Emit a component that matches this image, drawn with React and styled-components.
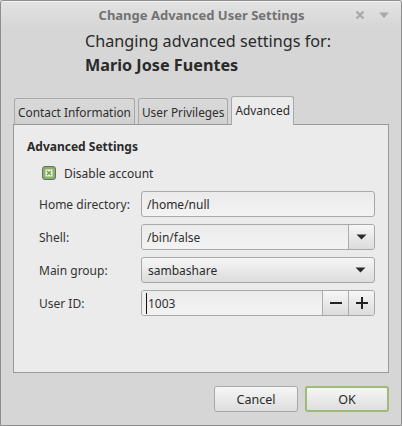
import React from "react";
import styled, { createGlobalStyle, css } from "styled-components";

const Global = createGlobalStyle`
  html, body { margin: 0; padding: 0; background: #d6d6d6; }
  body { font-family: "Noto Sans", "DejaVu Sans", sans-serif; font-size: 12px; color: #303030; }
  * { box-sizing: border-box; }
`;

const Window = styled.div`
  width: 402px;
  height: 426px;
  border: 1px solid #8e8e8e;
  border-radius: 3px 3px 0 0;
  background: #d6d6d6;
  display: flex;
  flex-direction: column;
  overflow: hidden;
`;

const TitleBar = styled.div`
  height: 27px;
  flex: none;
  display: grid;
  grid-template-columns: 1fr auto 1fr;
  align-items: center;
  background: linear-gradient(#e2e2e2, #d6d6d6);
  border-top: 1px solid #f4f4f4;
`;

const Title = styled.div`
  grid-column: 2;
  font-weight: bold;
  font-size: 13px;
  color: #727272;
  padding-left: 1px;
`;

const Controls = styled.div`
  justify-self: end;
  display: flex;
  align-items: center;
  gap: 14px;
  padding-right: 12px;
`;

const Header = styled.div`
  padding: 1px 0 0 84px;
  font-size: 16.2px;
  line-height: 24px;
  color: #2a2a2a;
`;

const Name = styled.div`
  font-weight: bold;
`;

const Notebook = styled.div`
  margin: 19px 12px 0 12px;
  display: flex;
  flex-direction: column;
`;

const TabStrip = styled.div`
  display: flex;
  align-items: flex-end;
  gap: 3px;
  padding-left: 1px;
  height: 28px;
  position: relative;
  z-index: 1;
`;

const Tab = styled.div`
  height: 26px;
  padding: 0 3px;
  border: 1px solid #a9a9a9;
  border-bottom: none;
  border-radius: 3px 3px 0 0;
  display: flex;
  align-items: center;
  font-size: 11.85px;
  background: linear-gradient(#dadada, #d0d0d0);
  color: #2e2e2e;
  ${(p) =>
    p.$active &&
    css`
      background: #ebebeb;
      margin-bottom: -1px;
      height: 29px;
      padding-bottom: 3px;
    `}
`;

const Panel = styled.div`
  height: 249px;
  border: 1px solid #999;
  background: #ebebeb;
  padding: 12px 13px 0 13px;
`;

const SectionTitle = styled.div`
  font-weight: bold;
  line-height: 20px;
  color: #2a2a2a;
`;

const CheckRow = styled.label`
  display: flex;
  align-items: center;
  gap: 8px;
  margin: 7px 0 0 15px;
  height: 18px;
  color: #2e2e2e;
`;

const Form = styled.div`
  display: grid;
  grid-template-columns: 102px 1fr;
  row-gap: 7px;
  align-items: center;
  margin: 9px 0 0 12px;
`;

const Label = styled.div`
  color: #333;
`;

const fieldBox = css`
  height: 26px;
  border: 1px solid #a8a8a8;
  border-radius: 3px;
`;

const Entry = styled.div`
  ${fieldBox};
  background: linear-gradient(#ebebeb, #f3f3f3);
  display: flex;
  align-items: center;
  padding-left: 5px;
  color: #2a2a2a;
`;

const Combo = styled.div`
  ${fieldBox};
  display: flex;
  overflow: hidden;
`;

const ComboText = styled.div`
  flex: 1;
  display: flex;
  align-items: center;
  padding-left: 5px;
  background: linear-gradient(#ebebeb, #f3f3f3);
`;

const SideButton = styled.div`
  width: 26px;
  display: flex;
  align-items: center;
  justify-content: center;
  border-left: 1px solid #ababab;
  background: linear-gradient(#f6f6f6, #dcdcdc);
`;

const ComboButton = styled.div`
  ${fieldBox};
  display: flex;
  align-items: center;
  justify-content: space-between;
  padding: 0 8px 0 6px;
  background: linear-gradient(#f6f6f6, #dcdcdc);
  color: #2a2a2a;
`;

const Caret = styled.span`
  width: 1px;
  height: 21px;
  background: #111;
  margin-right: 1px;
  margin-left: -1px;
`;

const Footer = styled.div`
  flex: 1;
  display: flex;
  justify-content: flex-end;
  align-items: flex-start;
  gap: 7px;
  padding: 13px 12px 0 0;
`;

const Button = styled.div`
  width: 84px;
  height: 26px;
  border: ${(p) => (p.$default ? "2px solid #9bbd78" : "1px solid #a8a8a8")};
  border-radius: 3px;
  background: linear-gradient(#f6f6f6, #dedede);
  display: flex;
  align-items: center;
  justify-content: center;
  color: #2a2a2a;
  font-size: 12.5px;
`;

const Arrow = () => (
  <svg width="11" height="6" viewBox="0 0 11 6">
    <path d="M0.5 0.5 L10.5 0.5 L5.5 5.5 Z" fill="#2a2a2a" />
  </svg>
);

const CheckIcon = () => (
  <svg width="14" height="14" viewBox="0 0 14 14">
    <rect x="0.5" y="0.5" width="13" height="13" rx="2.5" fill="#8ab268" stroke="#6b6b6b" />
    <rect x="3.5" y="3.5" width="7" height="7" fill="#eef4e6" />
    <path d="M5 5 L9 9 M9 5 L5 9" stroke="#6c9a45" strokeWidth="1.4" />
  </svg>
);

const Close = () => (
  <svg width="10" height="10" viewBox="0 0 10 10">
    <path d="M1.5 1.5 L8.5 8.5 M8.5 1.5 L1.5 8.5" stroke="#a8a8a8" strokeWidth="2.2" />
  </svg>
);

const Menu = () => (
  <svg width="10" height="7" viewBox="0 0 10 7">
    <path d="M0 0.5 L10 0.5 L5 6 Z" fill="#a8a8a8" />
  </svg>
);

const Minus = () => (
  <svg width="12" height="12" viewBox="0 0 12 12">
    <rect x="0" y="5" width="12" height="2" fill="#222" />
  </svg>
);

const Plus = () => (
  <svg width="12" height="12" viewBox="0 0 12 12">
    <rect x="0" y="5" width="12" height="2" fill="#222" />
    <rect x="5" y="0" width="2" height="12" fill="#222" />
  </svg>
);

export default function App() {
  return (
    <>
      <Global />
      <Window>
        <TitleBar>
          <Title>Change Advanced User Settings</Title>
          <Controls>
            <Close />
            <Menu />
          </Controls>
        </TitleBar>
        <Header>
          <div>Changing advanced settings for:</div>
          <Name>Mario Jose Fuentes</Name>
        </Header>
        <Notebook>
          <TabStrip>
            <Tab>Contact Information</Tab>
            <Tab>User Privileges</Tab>
            <Tab $active>Advanced</Tab>
          </TabStrip>
          <Panel>
            <SectionTitle>Advanced Settings</SectionTitle>
            <CheckRow>
              <CheckIcon />
              Disable account
            </CheckRow>
            <Form>
              <Label>Home directory:</Label>
              <Entry>/home/null</Entry>
              <Label>Shell:</Label>
              <Combo>
                <ComboText>/bin/false</ComboText>
                <SideButton>
                  <Arrow />
                </SideButton>
              </Combo>
              <Label>Main group:</Label>
              <ComboButton>
                sambashare
                <Arrow />
              </ComboButton>
              <Label>User ID:</Label>
              <Combo>
                <ComboText>
                  <Caret />
                  1003
                </ComboText>
                <SideButton>
                  <Minus />
                </SideButton>
                <SideButton>
                  <Plus />
                </SideButton>
              </Combo>
            </Form>
          </Panel>
        </Notebook>
        <Footer>
          <Button>Cancel</Button>
          <Button $default>OK</Button>
        </Footer>
      </Window>
    </>
  );
}
